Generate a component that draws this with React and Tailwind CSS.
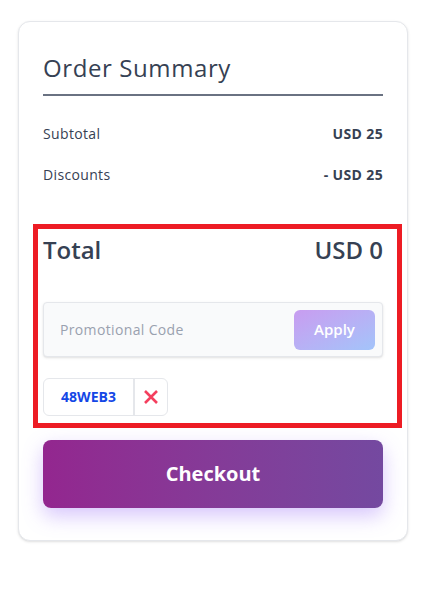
import React from "react";

const App = () => {
  return (
    <div className="min-h-screen bg-white pt-[21px] pl-[18px] pr-[21px]" style={{ fontFamily: "'Open Sans', 'Noto Sans', sans-serif" }}>
      <div className="w-[390px] rounded-xl border border-gray-200 bg-white px-6 pt-[30px] pb-8 shadow-sm">
        <h2 className="border-b-2 border-gray-500 pb-[10px] text-2xl leading-8 tracking-wide text-gray-700">Order Summary</h2>

        <div className="mt-[28px] flex items-center justify-between text-sm tracking-wide text-gray-700">
          <span>Subtotal</span>
          <span className="font-bold">USD 25</span>
        </div>
        <div className="mt-[21px] flex items-center justify-between text-sm tracking-wide text-gray-700">
          <span>Discounts</span>
          <span className="font-bold">- USD 25</span>
        </div>

        <div className="-ml-[10px] -mr-[19px] mt-[39px] border-[5px] border-[#ed1c24] pl-[5px] pr-[14px] pt-[5px] pb-[7px]">
          <div className="flex items-center justify-between text-2xl font-semibold leading-8 text-gray-700">
            <span>Total</span>
            <span>USD 0</span>
          </div>

          <div className="mt-[36px] flex h-[55px] items-center justify-between rounded border border-gray-200 bg-gray-50 pl-4 pr-[7px] shadow-sm">
            <span className="text-sm tracking-wide text-gray-400">Promotional Code</span>
            <button className="h-10 w-[81px] rounded-md bg-gradient-to-br from-[#c89cf0] to-[#a2c4fa] text-[15px] font-semibold text-white">
              Apply
            </button>
          </div>

          <div className="mt-[21px] flex h-[38px] w-[125px] items-stretch rounded-md border border-gray-200">
            <span className="flex w-[91px] items-center justify-center border-r-2 border-gray-200 text-sm font-bold text-blue-700">48WEB3</span>
            <span className="flex flex-1 items-center justify-center">
              <svg width="16" height="16" viewBox="0 0 16 16" fill="none" stroke="#f43f5e" strokeWidth="2.6" strokeLinecap="butt">
                <path d="M2 2L14 14M14 2L2 14" />
              </svg>
            </span>
          </div>
        </div>

        <button className="mt-3 h-[68px] w-full rounded-lg bg-gradient-to-r from-[#93268f] to-[#7449a0] text-xl font-bold text-white shadow-[0_8px_20px_rgba(139,92,246,0.35)]">
          Checkout
        </button>
      </div>
    </div>
  );
};

export default App;
